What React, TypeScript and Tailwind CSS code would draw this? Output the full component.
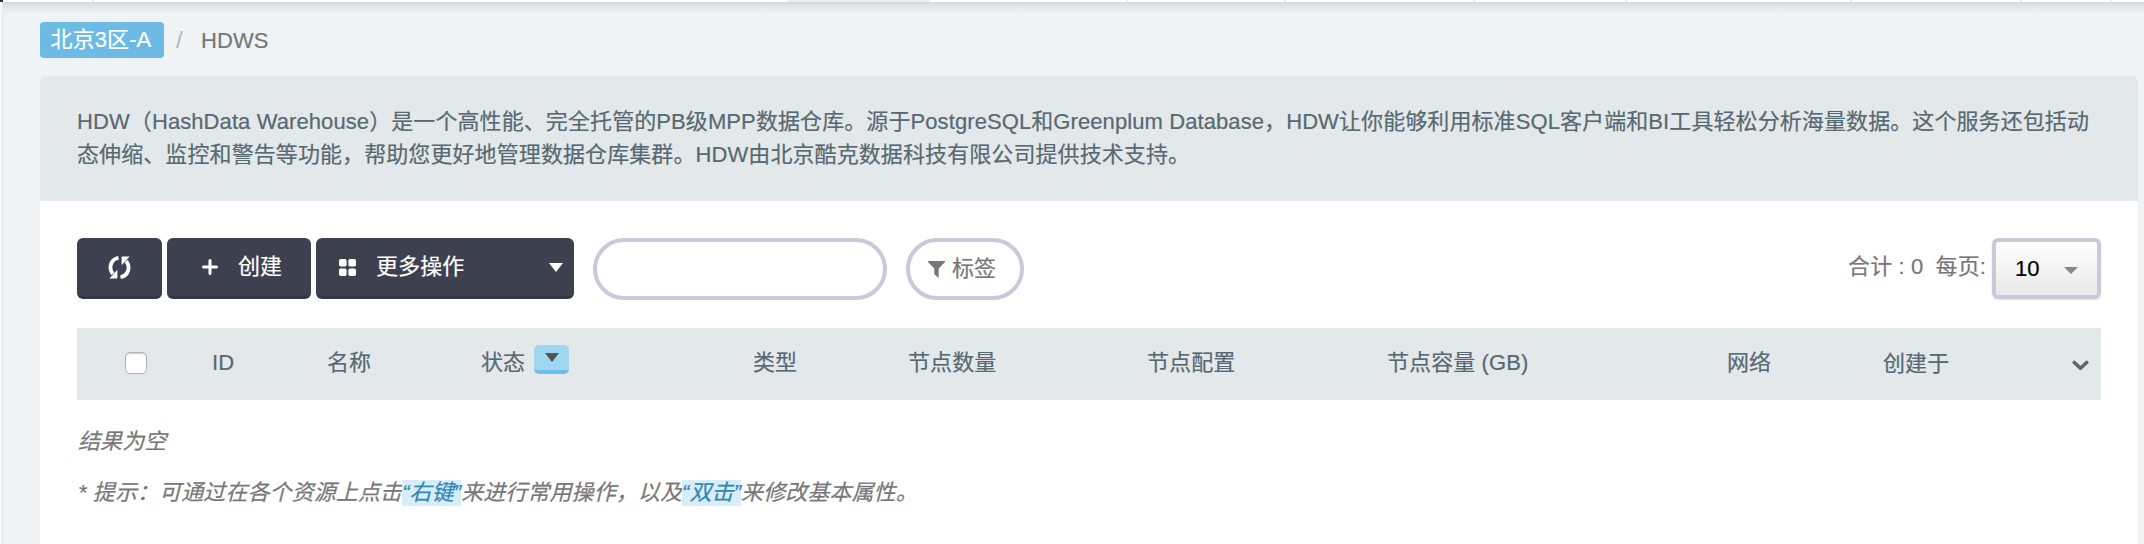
import React from "react";

const navDividers = ["w-[91px]", "w-[696px]"];
const navTail = ["w-[198px]", "w-[158px]", "w-[189px]", "w-[152px]", "w-[225px]", "w-[170px]", "w-[90px]"];

const columns = [
  { label: "ID", cls: "w-[115px]" },
  { label: "名称", cls: "w-[154px]" },
  { label: "状态", cls: "w-[272px]", filter: true },
  { label: "类型", cls: "w-[155px]" },
  { label: "节点数量", cls: "w-[239px]" },
  { label: "节点配置", cls: "w-[240px]" },
  { label: "节点容量 (GB)", cls: "w-[340px]" },
  { label: "网络", cls: "w-[156px]" },
];

function Mark({ children }: { children: React.ReactNode }) {
  return <span className="bg-[#d7edf7] text-[#3286b4] inline-block h-[26px] leading-[26px]">{children}</span>;
}

export default function App() {
  return (
    <div className="relative h-[544px] w-[2144px] overflow-hidden bg-[#eff3f6] font-['Liberation_Sans','Noto_Sans_CJK_SC',sans-serif] text-[22px] tracking-[0.09px] [text-spacing-trim:space-all] [-webkit-text-stroke:0.2px] flex">
      <div className="absolute left-0 top-0 flex h-[2px] w-full bg-white">
        <span className="w-[3px] bg-[#2f3140]" />
        {navDividers.map((c) => (
          <span key={c} className={c + " border-r-2 border-[#ececec]"} />
        ))}
        <span className="w-[140px] bg-[#e6f5ec]" />
        {navTail.map((c) => (
          <span key={c} className={c + " border-r-2 border-[#ececec]"} />
        ))}
      </div>
      <div className="absolute left-[3px] top-[2px] h-[12px] w-full bg-gradient-to-b from-[#d6d7d8] via-[#e5e8ea] via-45% to-[#eff3f6]" />
      <div className="w-[3px] shrink-0 border-r border-[#e3e5e7] bg-[#f6f7f8]" />

      <div className="ml-[37px] flex w-[2098px] flex-col">
        <nav className="mt-[22px] flex h-9 items-center">
          <span className="flex h-9 w-[124px] items-center justify-center rounded-[4px] bg-[#6dbae5] pr-0.5 leading-none text-white">北京3区-A</span>
          <span className="ml-3 w-[25px] text-[24px] text-[#bbbbbb]">/</span>
          <span className="text-[#777777]">HDWS</span>
        </nav>

        <section className="mt-[18px] h-[125px] rounded-t-[6px] bg-[#e3e8ea] px-[37px] pt-[29px] leading-[33px] text-[#576971]">
          <p className="whitespace-nowrap">HDW（HashData Warehouse）是一个高性能、完全托管的PB级MPP数据仓库。源于PostgreSQL和Greenplum Database，HDW让你能够利用标准SQL客户端和BI工具轻松分析海量数据。这个服务还包括动</p>
          <p className="whitespace-nowrap">态伸缩、监控和警告等功能，帮助您更好地管理数据仓库集群。HDW由北京酷克数据科技有限公司提供技术支持。</p>
        </section>

        <main className="h-[343px] bg-white px-[37px] pt-[37px] text-[#777777]">
          <div className="flex h-[63px] items-start">
            <button className="flex h-[61px] w-[85px] items-center justify-center rounded-[6px] border-b-[3px] border-[#353847] bg-[#3d404f]">
              <svg className="h-[23px] w-[23px]" viewBox="0 0 23 23" fill="none" stroke="#fff" strokeWidth="3.8">
                <path d="M10.5 1.9 C3 3.2 0 11.5 4.8 18" />
                <path d="M12.5 21.1 C20 19.8 23 11.5 18.2 5" />
                <path d="M1.4 22.4 H9.4 V13.8 Z" fill="#fff" stroke="none" />
                <path d="M21.6 0.6 H13.6 V9.2 Z" fill="#fff" stroke="none" />
              </svg>
            </button>
            <button className="ml-[5px] flex h-[61px] w-[144px] items-center rounded-[6px] border-b-[3px] border-[#353847] bg-[#3d404f] pl-[35px] leading-none text-white">
              <svg className="mr-[20px] h-4 w-4" viewBox="0 0 16 16" stroke="#fff" strokeWidth="3" strokeLinecap="round">
                <path d="M8 1.5V14.5M1.5 8H14.5" />
              </svg>
              创建
            </button>
            <button className="ml-[5px] flex h-[61px] w-[258px] items-center rounded-[6px] border-b-[3px] border-[#353847] bg-[#3d404f] pl-[23px] pr-[11px] leading-none text-white">
              <svg className="mr-[20px] h-[17px] w-[17px]" viewBox="0 0 17 17" fill="#fff">
                <rect width="7.6" height="7.6" rx="1.8" />
                <rect x="9.4" width="7.6" height="7.6" rx="1.8" />
                <rect y="9.4" width="7.6" height="7.6" rx="1.8" />
                <rect x="9.4" y="9.4" width="7.6" height="7.6" rx="1.8" />
              </svg>
              更多操作
              <svg className="ml-auto h-[9px] w-[14px]" viewBox="0 0 14 9" fill="#fff">
                <path d="M0 0H14L7 9Z" />
              </svg>
            </button>
            <input className="ml-[19px] h-[62px] w-[294px] rounded-full border-4 border-[#cbc9d9] bg-white px-6 outline-none" />
            <button className="ml-[19px] flex h-[62px] w-[118px] items-center rounded-full border-4 border-[#cbc9d9] pl-[18px] leading-none">
              <svg className="mr-[7px] h-[17px] w-[17px]" viewBox="0 0 17 17" fill="#777">
                <path d="M0 0H17V1L10.7 7.6V17L6.3 13.2V7.6L0 1Z" />
              </svg>
              标签
            </button>
            <div className="ml-auto flex h-[61px] items-center whitespace-pre leading-none">
              <span className="mr-[6px] -mt-1">合计 : 0&nbsp; 每页:</span>
              <div className="flex h-[61px] w-[109px] items-center justify-between rounded-[6px] border-4 border-[#cbc9d9] bg-gradient-to-b from-white to-[#e9e9e9] pl-[19px] pr-[19px] text-black shadow-[0_1px_2px_rgba(0,0,0,0.12)]">
                10
                <svg className="mt-1 h-[7px] w-[14px]" viewBox="0 0 14 7" fill="#888">
                  <path d="M0 0H14L7 7Z" />
                </svg>
              </div>
            </div>
          </div>

          <div className="mt-[27px] flex h-[72px] items-center bg-[#e3e8ea] pb-0.5 leading-none text-[#576971]">
            <span className="ml-[48px] mr-[65px] h-[22px] w-[22px] rounded-[5px] border border-[#b4b4b4] bg-white shadow-[inset_0_1px_1px_rgba(0,0,0,0.2)]" />
            {columns.map((c) => (
              <div key={c.label} className={c.cls + " flex shrink-0 items-center whitespace-nowrap"}>
                {c.label}
                {c.filter && (
                  <span className="-mt-2 ml-[9px] flex h-[29px] w-[35px] items-center justify-center rounded-[5px] border-b-4 border-[#6dbfe9] bg-[#9fd6f1]">
                    <svg className="h-[9px] w-[14px]" viewBox="0 0 14 9" fill="#555">
                      <path d="M0 0H14L7 9Z" />
                    </svg>
                  </span>
                )}
              </div>
            ))}
            <span className="mt-0.5 whitespace-nowrap">创建于</span>
            <svg className="ml-auto mr-[12px] mt-1 h-[11px] w-[17px]" viewBox="0 0 17 11" fill="none" stroke="#576971" strokeWidth="3.6" strokeLinecap="round" strokeLinejoin="round">
              <path d="M2.3 2.5L8.5 8.3L14.7 2.5" />
            </svg>
          </div>

          <p className="mt-[25px] h-[33px] pl-px italic leading-[33px]">结果为空</p>
          <p className="mt-[18px] flex h-[33px] items-center whitespace-pre pl-px italic leading-[33px]">
            <span>* 提示：可通过在各个资源上点击</span>
            <Mark>“右键”</Mark>
            <span>来进行常用操作，以及</span>
            <Mark>“双击”</Mark>
            <span>来修改基本属性。</span>
          </p>
        </main>
      </div>
    </div>
  );
}
